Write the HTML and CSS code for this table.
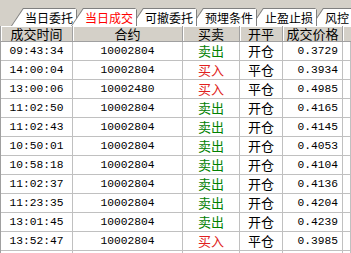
FILE: index.html
```html
<!DOCTYPE html>
<html>
<head>
<meta charset="utf-8">
<link rel="stylesheet" href="styles.css">
</head>
<body>
<div class="tabs">
  <div class="tab t1"><div class="face">当日委托</div></div>
  <div class="tab t2 active"><div class="face">当日成交</div></div>
  <div class="tab t3"><div class="face">可撤委托</div></div>
  <div class="tab t4"><div class="face">预埋条件</div></div>
  <div class="tab t5"><div class="face">止盈止损</div></div>
  <div class="tab t6"><div class="face">风控</div></div>
</div>
<div class="grid">
  <div class="h">成交时间</div><div class="h">合约</div><div class="h">买卖</div><div class="h">开平</div><div class="h">成交价格</div><div class="h blank"></div>

  <div class="c num">09:43:34</div><div class="c num">10002804</div><div class="c sell">卖出</div><div class="c">开仓</div><div class="c num price">0.3729</div><div class="c"></div>
  <div class="c num">14:00:04</div><div class="c num">10002804</div><div class="c buy">买入</div><div class="c">平仓</div><div class="c num price">0.3934</div><div class="c"></div>
  <div class="c num">13:00:06</div><div class="c num">10002480</div><div class="c buy">买入</div><div class="c">平仓</div><div class="c num price">0.4985</div><div class="c"></div>
  <div class="c num">11:02:50</div><div class="c num">10002804</div><div class="c sell">卖出</div><div class="c">开仓</div><div class="c num price">0.4165</div><div class="c"></div>
  <div class="c num">11:02:43</div><div class="c num">10002804</div><div class="c sell">卖出</div><div class="c">开仓</div><div class="c num price">0.4145</div><div class="c"></div>
  <div class="c num">10:50:01</div><div class="c num">10002804</div><div class="c sell">卖出</div><div class="c">开仓</div><div class="c num price">0.4053</div><div class="c"></div>
  <div class="c num">10:58:18</div><div class="c num">10002804</div><div class="c sell">卖出</div><div class="c">开仓</div><div class="c num price">0.4104</div><div class="c"></div>
  <div class="c num">11:02:37</div><div class="c num">10002804</div><div class="c sell">卖出</div><div class="c">开仓</div><div class="c num price">0.4136</div><div class="c"></div>
  <div class="c num">11:23:35</div><div class="c num">10002804</div><div class="c sell">卖出</div><div class="c">开仓</div><div class="c num price">0.4204</div><div class="c"></div>
  <div class="c num">13:01:45</div><div class="c num">10002804</div><div class="c sell">卖出</div><div class="c">开仓</div><div class="c num price">0.4239</div><div class="c"></div>
  <div class="c num">13:52:47</div><div class="c num">10002804</div><div class="c buy">买入</div><div class="c">平仓</div><div class="c num price">0.3985</div><div class="c"></div>
  <div class="c end"></div><div class="c end"></div><div class="c end"></div><div class="c end"></div><div class="c end"></div><div class="c end"></div>
</div>
</body>
</html>
```
FILE: styles.css
```css
html, body {
  margin: 0;
  padding: 0;
  background: #d4d0c8;
  width: 351px;
  height: 253px;
  overflow: hidden;
  font-family: "Noto Sans CJK SC", sans-serif;
}

.tabs {
  display: flex;
  align-items: flex-end;
  height: 26px;
  padding-left: 11px;
  box-sizing: border-box;
  white-space: nowrap;
  overflow: hidden;
}

.tab {
  flex: 0 0 66px;
  height: 18px;
  margin-left: -6px;
  padding: 1px 1px 0 1px;
  box-sizing: border-box;
  background: #808080;
  clip-path: polygon(0 100%, 12px 0, calc(100% - 2px) 0, 100% 2px, 100% 100%);
}
.tab.t1 { margin-left: 0; z-index: 6; }
.tab.t2 { z-index: 5; }
.tab.t3 { z-index: 4; }
.tab.t4 { z-index: 3; }
.tab.t5 { z-index: 2; }
.tab.t6 { z-index: 1; flex-basis: 46px; }
.tab.active { z-index: 10; }

.face {
  height: 17px;
  background: #ffffff;
  clip-path: polygon(0 100%, 11.5px 0, 100% 0, 100% 100%);
  padding-left: 13px;
  font-size: 12px;
  line-height: 17px;
  color: #000;
}
.tab.active .face { color: #ff0000; }

.grid {
  display: grid;
  grid-template-columns: 72px 110px 57px 43px 60px 1fr;
  grid-template-rows: 16px repeat(11, 19px) 2px;
  border-left: 1px solid #a0a0a0;
  font-size: 13px;
}

.h {
  background: #d4d0c8;
  border-right: 1px solid #a0a0a0;
  border-bottom: 1px solid #a0a0a0;
  box-shadow: inset 1px 1px 0 #ffffff;
  text-align: center;
  line-height: 15px;
  color: #000;
}
.h.blank { border-right: none; }

.c {
  background: #ffffff;
  border-right: 1px solid #c0c0c0;
  border-bottom: 1px solid #c0c0c0;
  text-align: center;
  line-height: 18px;
  color: #000;
}
.c.end { border-bottom: none; }

.num {
  font-family: "Liberation Mono", "Noto Sans CJK SC", monospace;
  font-size: 11.25px;
}
.price {
  text-align: right;
  padding-right: 4px;
}
.sell { color: #008000; }
.buy { color: #e02020; }
```
